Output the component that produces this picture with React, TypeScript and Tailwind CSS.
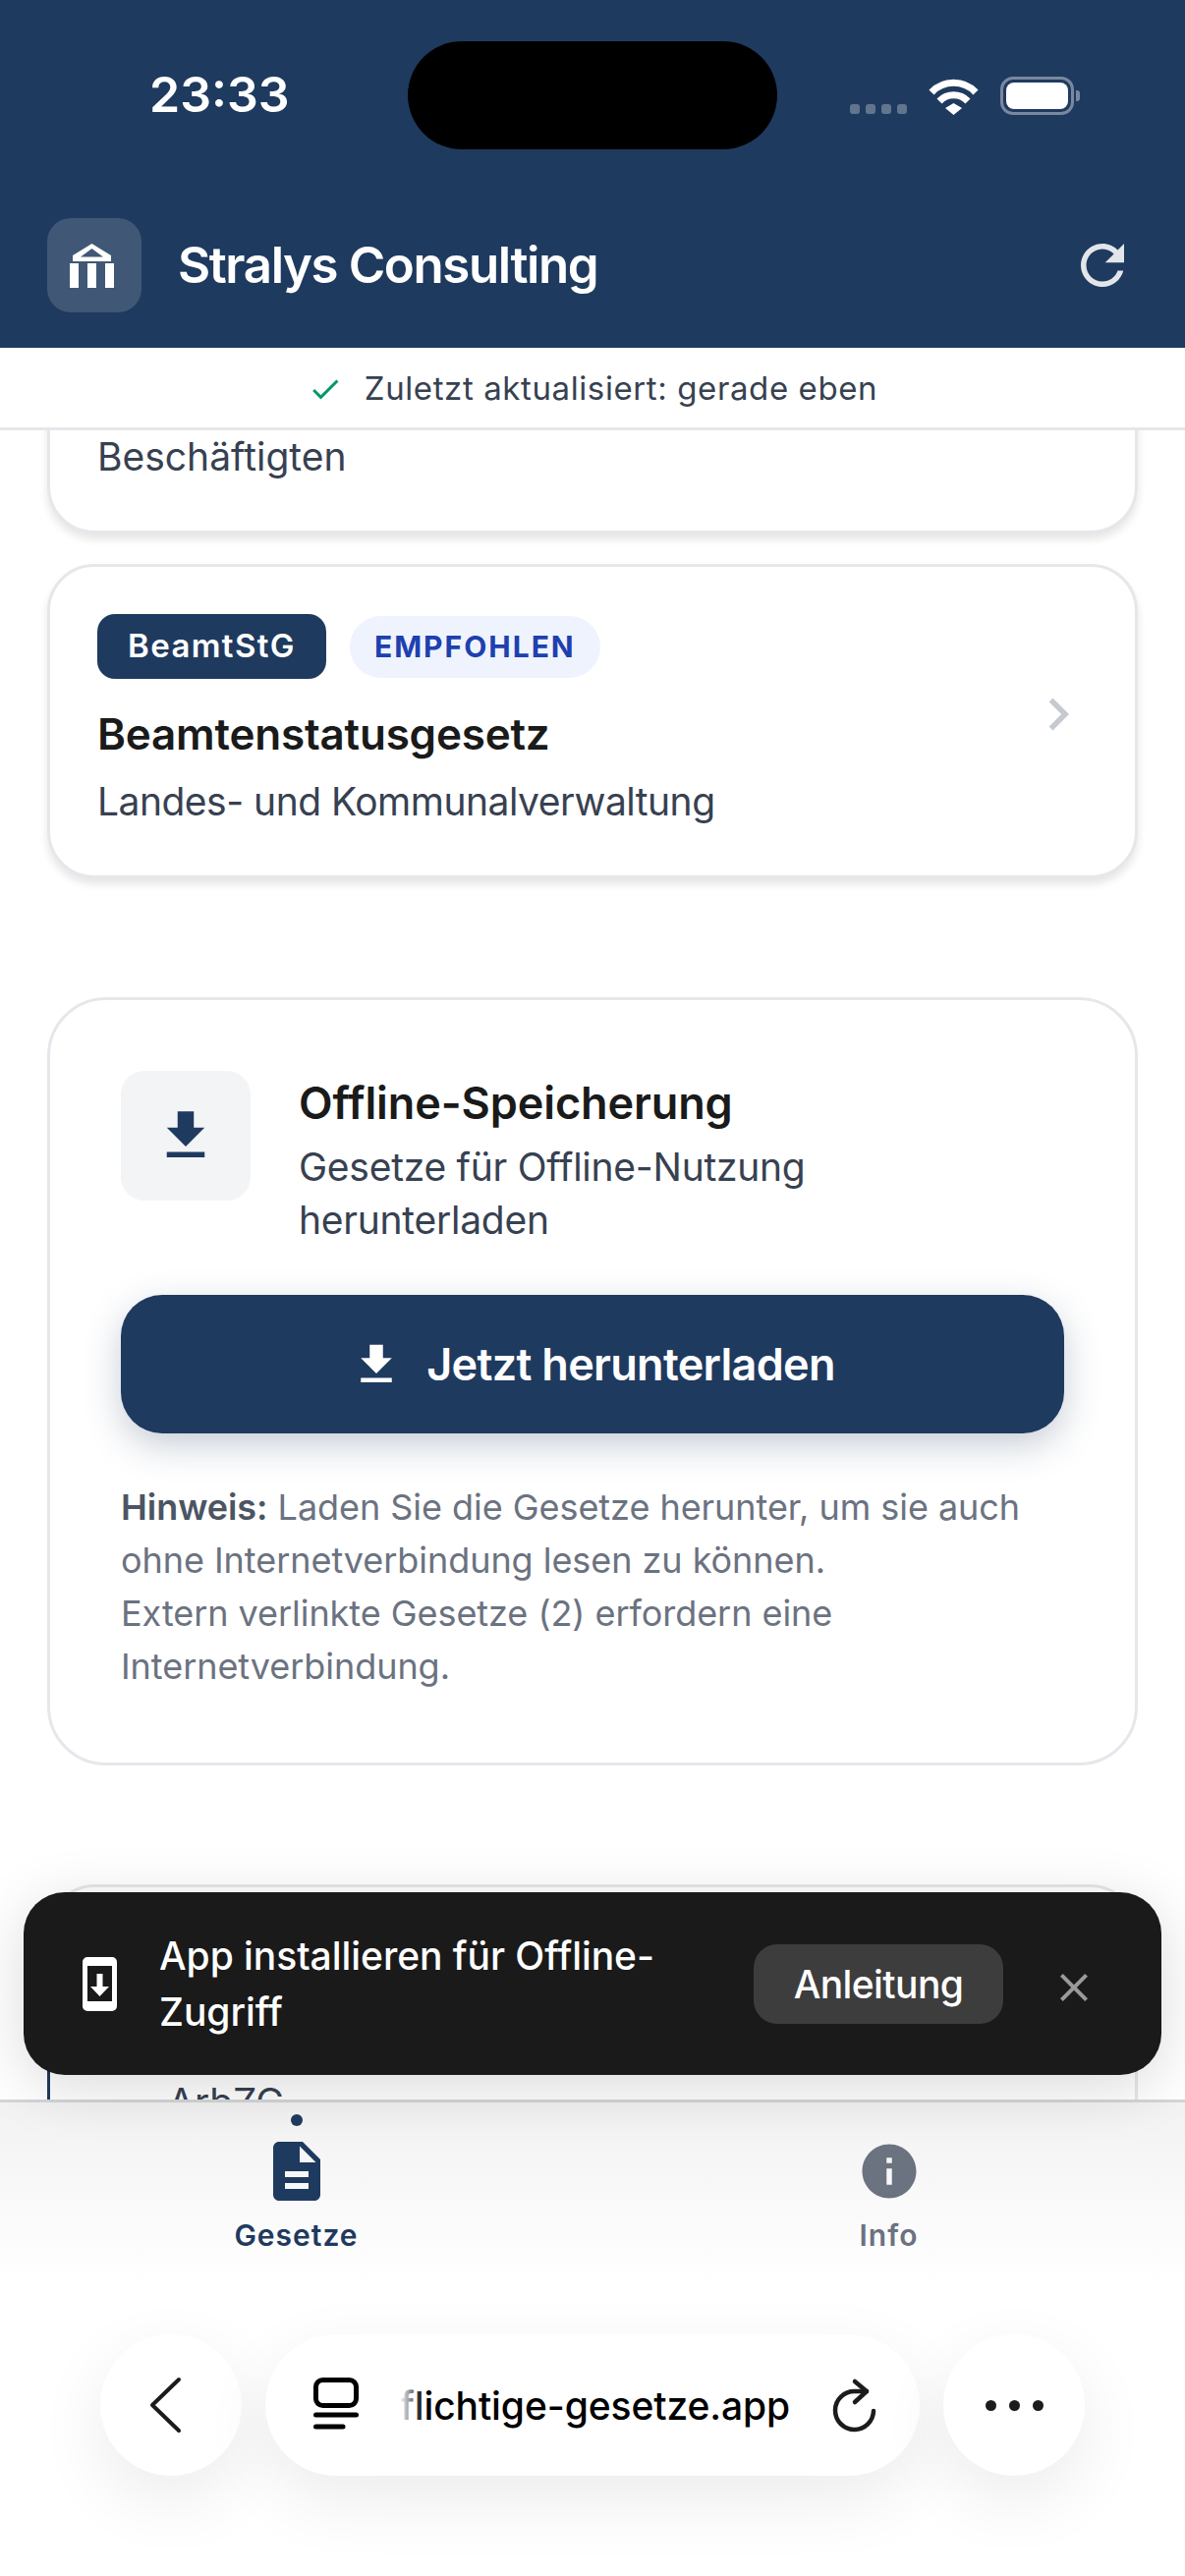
import type { ReactNode } from 'react'

function StatusIcons() {
  return (
    <div className="flex items-end gap-[22px] pl-[74px] pb-[35px]">
      <div className="flex gap-[6px] pb-[1px]">
        {[0, 1, 2, 3].map((dot) => (
          <span key={dot} className="h-[10px] w-[10px] rounded-[3px] bg-white/30" />
        ))}
      </div>
      <svg width="51" height="37" viewBox="0 0 51 37" fill="none" stroke="white" strokeWidth="7">
        <path d="M3 14 A 31 31 0 0 1 48 14" />
        <path d="M11 23 A 20 20 0 0 1 40 23" />
        <path d="M17 30 L25.5 25 L34 30 L25.5 37 Z" fill="white" stroke="none" />
      </svg>
      <div className="flex items-center gap-[2px]">
        <div className="h-[39px] w-[75px] rounded-[13px] border-[3px] border-white/40 p-[3px]">
          <div className="h-full w-full rounded-[8px] bg-white" />
        </div>
        <span className="h-[11px] w-[4px] rounded-r-[3px] bg-white/40" />
      </div>
    </div>
  )
}

function AppHeader() {
  return (
    <header className="h-[354px] shrink-0 bg-[#1f3a5f] pt-[42px] text-white">
      <div className="flex h-[110px] items-stretch">
        <div className="flex w-[415px] items-center pl-[152px] pb-[2px] text-[50px] font-semibold leading-none">23:33</div>
        <div className="w-[376px] rounded-[55px] bg-black" />
        <StatusIcons />
      </div>
      <div className="mt-[70px] flex items-center pl-[48px] pr-[51px]">
        <div className="flex h-[96px] w-[96px] items-center justify-center rounded-[24px] bg-white/15">
          <svg className="mr-[5px]" width="45" height="45" viewBox="0 0 45 45" fill="white">
            <path fillRule="evenodd" d="M22.5 0 L42 12 V18 H3 V12 Z M22.5 5 L11 13.5 H34 Z" />
            <rect x="0" y="20" width="9" height="25" />
            <rect x="18" y="20" width="9" height="25" />
            <rect x="36" y="20" width="9" height="25" />
          </svg>
        </div>
        <h1 className="ml-[37px] flex-1 pb-[2px] text-[51px] font-semibold leading-none tracking-[-1.4px]">Stralys Consulting</h1>
        <svg width="66" height="66" viewBox="0 0 24 24" fill="#e2e6ea">
          <path d="M17.65 6.35C16.2 4.9 14.21 4 12 4c-4.42 0-7.99 3.58-7.99 8s3.57 8 7.99 8c3.73 0 6.84-2.55 7.73-6h-2.08c-.82 2.33-3.04 4-5.65 4-3.31 0-6-2.69-6-6s2.69-6 6-6c1.66 0 3.14.69 4.22 1.78L13 11h7V4l-2.35 2.35z" />
        </svg>
      </div>
    </header>
  )
}

function SyncStrip() {
  return (
    <div className="relative z-10 flex h-[84px] shrink-0 items-center justify-center gap-[22px] border-b-[3px] border-[#e5e7eb] bg-white pt-[2px] text-[33px] text-[#374151]">
      <svg width="36" height="36" viewBox="0 0 24 24" fill="#059669">
        <path d="M9 16.17L4.83 12l-1.42 1.41L9 19 21 7l-1.41-1.41z" />
      </svg>
      <span className="tracking-[0.6px]">Zuletzt aktualisiert: gerade eben</span>
    </div>
  )
}

function LawCard({ children }: { children: ReactNode }) {
  return (
    <div className="rounded-[48px] border-[3px] border-[#e5e7eb] bg-white shadow-[0_6px_9px_rgba(0,0,0,0.1)]">
      {children}
    </div>
  )
}

function RecommendedLaw() {
  return (
    <LawCard>
      <div className="flex items-center pl-[48px] pr-[45px] pt-[48px] pb-[48px]">
        <div className="flex-1">
          <div className="flex items-center gap-[24px]">
            <span className="flex h-[66px] items-center rounded-[18px] bg-[#1f3a5f] px-[31px] text-[33px] font-semibold tracking-[1.4px] text-white">
              BeamtStG
            </span>
            <span className="flex h-[63px] items-center rounded-full bg-[#eff3fd] px-[25px] text-[30px] font-bold tracking-[2px] text-[#1e40af]">
              EMPFOHLEN
            </span>
          </div>
          <h3 className="mt-[26px] text-[44px] font-semibold leading-[60px] tracking-[-0.2px] text-[#1a1a1a]">Beamtenstatusgesetz</h3>
          <p className="mt-[12px] text-[39px] leading-[54px] tracking-[-0.5px] text-[#374151]">Landes- und Kommunalverwaltung</p>
        </div>
        <svg className="mb-[14px]" width="66" height="66" viewBox="0 0 24 24" fill="#c5cad1">
          <path d="M10 6L8.59 7.41 13.17 12l-4.58 4.59L10 18l6-6z" />
        </svg>
      </div>
    </LawCard>
  )
}

function OfflineCard() {
  return (
    <section className="rounded-[60px] border-[3px] border-[#e5e7eb] bg-white px-[72px] pt-[72px] pb-[71px]">
      <div className="flex gap-[49px]">
        <div className="flex h-[132px] w-[132px] shrink-0 items-center justify-center rounded-[24px] bg-[#f3f4f6]">
          <svg width="66" height="66" viewBox="0 0 24 24" fill="#1f3a5f">
            <path d="M19 9h-4V3H9v6H5l7 7 7-7zM5 18v2h14v-2H5z" />
          </svg>
        </div>
        <div>
          <h2 className="pt-[3px] text-[45px] font-semibold leading-[60px] tracking-[-0.1px] text-[#1a1a1a]">Offline-Speicherung</h2>
          <p className="mt-[8px] w-[640px] text-[39px] leading-[54px] tracking-[-0.25px] text-[#374151]">
            Gesetze für Offline-Nutzung herunterladen
          </p>
        </div>
      </div>
      <button className="mt-[49px] flex h-[141px] w-full items-center justify-center gap-[24px] rounded-[42px] bg-[#1f3a5f] text-[45px] font-semibold tracking-[-0.7px] text-white shadow-[0_12px_36px_rgba(31,58,95,0.25)]">
        <svg width="54" height="54" viewBox="0 0 24 24" fill="white">
          <path d="M19 9h-4V3H9v6H5l7 7 7-7zM5 18v2h14v-2H5z" />
        </svg>
        Jetzt herunterladen
      </button>
      <p className="mt-[48px] text-[36px] leading-[54px] tracking-[-0.05px] text-[#6b7280]">
        <strong className="font-semibold text-[#4b5563]">Hinweis:</strong> Laden Sie die Gesetze herunter, um sie auch
        ohne Internetverbindung lesen zu können.
        <br />
        Extern verlinkte Gesetze (2) erfordern eine Internetverbindung.
      </p>
    </section>
  )
}

function InstallToast() {
  return (
    <div className="absolute left-[24px] right-[24px] top-[1926px] z-20 flex h-[186px] items-center rounded-[42px] bg-[#1a1a1a] pl-[60px] pr-[65px] shadow-[0_12px_60px_rgba(0,0,0,0.15)]">
      <svg className="shrink-0" width="35" height="55" viewBox="0 0 35 55" fill="white">
        <path fillRule="evenodd" d="M5 0 H30 A5 5 0 0 1 35 5 V50 A5 5 0 0 1 30 55 H5 A5 5 0 0 1 0 50 V5 A5 5 0 0 1 5 0 Z M5 9 V45 H30 V9 Z" />
        <path d="M14.5 17 H20.5 V30 H27 L17.5 40 L8 30 H14.5 Z" />
      </svg>
      <p className="ml-[43px] flex-1 pr-[60px] text-[39px] font-medium leading-[57px] tracking-[-0.05px] text-white">
        App installieren für Offline-Zugriff
      </p>
      <button className="flex h-[81px] w-[254px] shrink-0 items-center justify-center rounded-[24px] bg-[#3d3d3d] pt-[2px] text-[39px] font-medium tracking-[-0.6px] text-white">
        Anleitung
      </button>
      <svg className="ml-[48px] mt-[8px] shrink-0" width="48" height="48" viewBox="0 0 24 24" fill="#9a9a9a">
        <path d="M19 6.41L17.59 5 12 10.59 6.41 5 5 6.41 10.59 12 5 17.59 6.41 19 12 13.41 17.59 19 19 17.59 13.41 12z" />
      </svg>
    </div>
  )
}

function BottomNav() {
  return (
    <nav className="grid h-[236px] grid-cols-2">
      <div className="flex flex-col items-center text-[#1f3a5f]">
        <span className="mt-[12px] h-[12px] w-[12px] rounded-full bg-[#1f3a5f]" />
        <svg className="mt-[10px]" width="72" height="72" viewBox="0 0 24 24" fill="#1f3a5f">
          <path d="M14 2H6c-1.1 0-1.99.9-1.99 2L4 20c0 1.1.89 2 1.99 2H18c1.1 0 2-.9 2-2V8l-6-6zm2 16H8v-2h8v2zm0-4H8v-2h8v2zm-3-5V3.5L18.5 9H13z" />
        </svg>
        <span className="mt-[11px] text-[30px] font-semibold leading-[36px] tracking-[1px]">Gesetze</span>
      </div>
      <div className="flex flex-col items-center text-[#6b7280]">
        <svg className="mt-[37px]" width="66" height="66" viewBox="0 0 24 24" fill="#6b7280">
          <path d="M12 2C6.48 2 2 6.48 2 12s4.48 10 10 10 10-4.48 10-10S17.52 2 12 2zm1 15h-2v-6h2v6zm0-8h-2V7h2v2z" />
        </svg>
        <span className="mt-[14px] text-[30px] font-semibold leading-[36px] tracking-[1px]">Info</span>
      </div>
    </nav>
  )
}

function BrowserBar() {
  const pill = 'flex h-[144px] items-center bg-white shadow-[0_24px_70px_rgba(0,0,0,0.08)]'
  return (
    <div className="flex justify-center gap-[24px] text-black">
      <div className={`${pill} w-[144px] justify-center rounded-full`}>
        <svg className="mr-[12px]" width="36" height="58" viewBox="0 0 36 58" fill="none" stroke="#1c1c1e" strokeWidth="4" strokeLinecap="round" strokeLinejoin="round">
          <path d="M32 3 L5 29 L32 55" />
        </svg>
      </div>
      <div className={`${pill} w-[666px] rounded-[72px] pl-[49px]`}>
        <svg className="shrink-0" width="46" height="56" viewBox="0 0 46 56" fill="none" stroke="black" strokeLinecap="round">
          <rect x="2.5" y="2.5" width="41" height="26" rx="7" strokeWidth="5" />
          <path d="M2.5 38 H43.5" strokeWidth="5" />
          <path d="M2.5 50 H30" strokeWidth="5" />
        </svg>
        <span className="relative ml-[42px] w-[396px] text-[39px] font-medium leading-none tracking-[-0.1px] whitespace-nowrap">
          flichtige-gesetze.app
          <span className="absolute left-0 top-0 h-full w-[24px] bg-gradient-to-r from-white to-transparent" />
        </span>
        <svg className="ml-[42px] shrink-0" width="50" height="60" viewBox="0 0 50 60" fill="none" stroke="#1c1c1e" strokeWidth="4.5" strokeLinecap="round" strokeLinejoin="round">
          <path d="M44 36 A 19.5 19.5 0 1 1 25 16 H37" />
          <path d="M25 6 L37 16 L25 27" />
        </svg>
      </div>
      <div className={`${pill} w-[144px] justify-center gap-[13px] rounded-full`}>
        <span className="h-[11px] w-[11px] rounded-full bg-[#1c1c1e]" />
        <span className="h-[11px] w-[11px] rounded-full bg-[#1c1c1e]" />
        <span className="h-[11px] w-[11px] rounded-full bg-[#1c1c1e]" />
      </div>
    </div>
  )
}

export default function App() {
  return (
    <div className="relative flex h-[2622px] w-full flex-col overflow-hidden bg-white font-['Inter',sans-serif]">
      <AppHeader />
      <SyncStrip />
      <main className="min-h-0 flex-1 overflow-hidden">
        {/* list is scrolled, so the first card starts above the fold */}
        <div className="-mt-[200px] flex flex-col px-[48px]">
          <LawCard>
            <p className="pl-[48px] pt-[197px] pb-[48px] text-[39px] leading-[54px] text-[#374151]">Beschäftigten</p>
          </LawCard>
          <div className="mt-[31px]">
            <RecommendedLaw />
          </div>
          <div className="mt-[121px]">
            <OfflineCard />
          </div>
          <div className="mt-[121px] h-[400px] rounded-[48px] border-[3px] border-[#e5e7eb] border-l-[#1f3a5f] bg-white pl-[120px] pt-[192px] text-[39px] leading-[54px] text-[#374151]">
            ArbZG
          </div>
        </div>
      </main>
      <InstallToast />
      <div className="relative z-10 h-[485px] shrink-0 border-t-[3px] border-[#d4d5d9] bg-gradient-to-b from-[#f2f2f2] to-white to-[38%]">
        <BottomNav />
        <BrowserBar />
      </div>
    </div>
  )
}
